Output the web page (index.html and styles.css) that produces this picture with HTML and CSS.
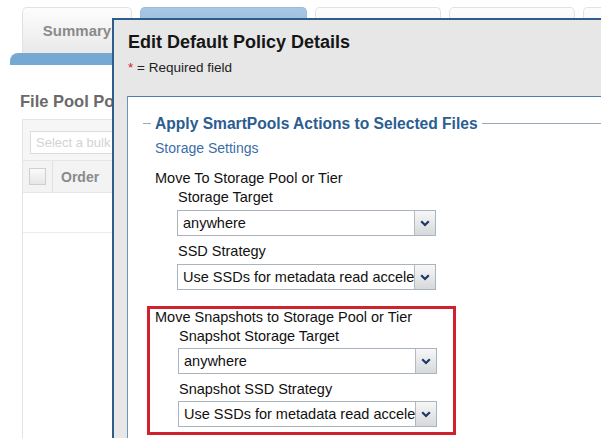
FILE: index.html
```html
<!DOCTYPE html>
<html lang="en">

<head>
    <meta charset="UTF-8">
    <title>Edit Default Policy Details</title>
    <link rel="stylesheet" href="styles.css">
</head>

<body>
    <div class="page">
        <div class="tabs">
            <div class="tab">Summary</div>
            <div class="tab tabActive"></div>
            <div class="tab"></div>
            <div class="tab"></div>
            <div class="tab"></div>
        </div>
        <div class="tabBar"></div>

        <h2 class="pageTitle">File Pool Policies</h2>

        <div class="gridPanel">
            <div class="gridToolbar">
                <input class="bulkInput" type="text" placeholder="Select a bulk action">
            </div>
            <div class="gridHead">
                <span class="chkCell"><span class="chk"></span></span>
                <span class="colName">Order</span>
            </div>
            <div class="gridRow"></div>
        </div>
    </div>

    <div class="modal">
        <div class="modalHead">
            <h1 class="modalTitle">Edit Default Policy Details</h1>
            <p class="required"><span class="star">*</span> = Required field</p>
        </div>

        <div class="modalBody">
            <fieldset class="actions">
                <legend>Apply SmartPools Actions to Selected Files</legend>
                <p class="subTitle">Storage Settings</p>

                <div class="group">
                    <p class="groupTitle">Move To Storage Pool or Tier</p>
                    <div class="field">
                        <label>Storage Target</label>
                        <div class="select">
                            <span class="selValue">anywhere</span>
                            <span class="selBtn"><svg width="10" height="7" viewBox="0 0 10 7"><path d="M1.2 1.2 L5 5 L8.8 1.2" fill="none" stroke="#1d3768" stroke-width="2.2"/></svg></span>
                        </div>
                    </div>
                    <div class="field">
                        <label>SSD Strategy</label>
                        <div class="select">
                            <span class="selValue">Use SSDs for metadata read acceleration</span>
                            <span class="selBtn"><svg width="10" height="7" viewBox="0 0 10 7"><path d="M1.2 1.2 L5 5 L8.8 1.2" fill="none" stroke="#1d3768" stroke-width="2.2"/></svg></span>
                        </div>
                    </div>
                </div>

                <div class="group highlight">
                    <p class="groupTitle">Move Snapshots to Storage Pool or Tier</p>
                    <div class="field">
                        <label>Snapshot Storage Target</label>
                        <div class="select">
                            <span class="selValue">anywhere</span>
                            <span class="selBtn"><svg width="10" height="7" viewBox="0 0 10 7"><path d="M1.2 1.2 L5 5 L8.8 1.2" fill="none" stroke="#1d3768" stroke-width="2.2"/></svg></span>
                        </div>
                    </div>
                    <div class="field">
                        <label>Snapshot SSD Strategy</label>
                        <div class="select">
                            <span class="selValue">Use SSDs for metadata read acceleration</span>
                            <span class="selBtn"><svg width="10" height="7" viewBox="0 0 10 7"><path d="M1.2 1.2 L5 5 L8.8 1.2" fill="none" stroke="#1d3768" stroke-width="2.2"/></svg></span>
                        </div>
                    </div>
                </div>
            </fieldset>
        </div>
    </div>
</body>

</html>
```

FILE: styles.css
```css
* {
    margin: 0;
    padding: 0;
    box-sizing: border-box;
    font-family: "Liberation Sans", Arial, Helvetica, sans-serif;
}

body {
    background-color: white;
    width: 601px;
    height: 438px;
    overflow: hidden;
    position: relative;
}

/* page behind the dialog */

.tabs {
    display: flex;
    gap: 8px;
    padding: 7px 0 0 22px;
}

.tab {
    width: 126px;
    height: 46px;
    flex-shrink: 0;
    border: 1px solid #e2e2e2;
    border-bottom: none;
    border-radius: 5px 5px 0 0;
    background: linear-gradient(#fdfdfd, #e9e9e9);
    color: #8a8a8a;
    font-size: 15px;
    font-weight: bold;
    text-align: center;
    line-height: 46px;
}

.tab:first-child {
    width: 110px;
}

.tabActive {
    width: 167px;
    background: linear-gradient(#a9c8e4, #7eaed6);
    border-color: #9bbddc;
}

.tabBar {
    height: 12px;
    margin-left: 10px;
    background-color: #76a9d2;
    border-radius: 8px 0 0 0;
}

.pageTitle {
    margin: 26px 0 0 20px;
    font-size: 16.5px;
    color: #6a6a6a;
    line-height: 20px;
    white-space: nowrap;
}

.gridPanel {
    margin: 8px 0 0 22px;
    width: 300px;
    height: 340px;
    border: 1px solid #e4e4e4;
    background-color: white;
}

.gridToolbar {
    background-color: #f6f6f6;
    padding: 11px 0 6px 7px;
    border-bottom: 1px solid #e6e6e6;
}

.bulkInput {
    width: 200px;
    height: 23px;
    border: 1px solid #d7dde4;
    padding-left: 5px;
    font-size: 13px;
    background-color: white;
}

.bulkInput::placeholder {
    color: #d3d3d3;
}

.gridHead {
    display: flex;
    align-items: center;
    height: 32px;
    background-color: #f3f3f3;
    border-bottom: 1px solid #e6e6e6;
}

.chkCell {
    width: 30px;
    height: 100%;
    display: flex;
    align-items: center;
    justify-content: center;
    border-right: 1px solid #e2e2e2;
}

.chk {
    width: 17px;
    height: 17px;
    border: 1px solid #cfcfcf;
    background: linear-gradient(#fafafa, #e6e6e6);
}

.colName {
    padding-left: 8px;
    font-size: 14px;
    font-weight: bold;
    color: #8a8a8a;
}

.gridRow {
    height: 40px;
    border-bottom: 1px solid #ececec;
}

/* dialog */

.modal {
    position: absolute;
    left: 112px;
    top: 18px;
    width: 520px;
    height: 440px;
    border: 2px solid #2f5d8b;
    border-right: none;
    border-bottom: none;
    background-color: #e7e7e7;
}

.modalHead {
    padding: 11px 0 0 14px;
    height: 76px;
}

.modalTitle {
    font-size: 18px;
    line-height: 22px;
    color: #151515;
}

.required {
    margin-top: 7px;
    font-size: 13.5px;
    line-height: 16px;
    color: #222;
}

.star {
    color: #d0202a;
}

.modalBody {
    margin-left: 13px;
    height: 400px;
    background-color: white;
    border-top: 1px solid #4f7dab;
    border-left: 1px solid #6b93bb;
    padding: 18px 0 0 15px;
}

.actions {
    border: none;
    border-top: 1px solid #98a9ba;
    padding: 0 0 0 12px;
    min-width: 0;
}

.actions legend {
    margin-left: -4px;
    padding: 0 4px;
    font-size: 15.6px;
    font-weight: bold;
    line-height: 17px;
    color: #2b5d91;
}

.subTitle {
    margin-top: 7px;
    font-size: 14px;
    line-height: 19px;
    color: #3a6ea6;
}

.group {
    margin-top: 11px;
    width: 309px;
}

.groupTitle {
    font-size: 14.5px;
    line-height: 19px;
    color: #111;
}

.field {
    padding-left: 22px;
    margin-bottom: 6px;
}

.field label {
    display: block;
    padding-left: 1px;
    font-size: 14.5px;
    line-height: 19px;
    color: #111;
}

.select {
    display: flex;
    width: 259px;
    height: 26px;
    margin-top: 3px;
    border: 1px solid #aab4bf;
    background-color: white;
}

.selValue {
    flex: 1;
    overflow: hidden;
    white-space: nowrap;
    padding-left: 5px;
    font-size: 14.5px;
    line-height: 24px;
    color: #111;
}

.selBtn {
    width: 21px;
    display: flex;
    align-items: center;
    justify-content: center;
    border-left: 1px solid #b3b9c0;
    background: linear-gradient(#f7f7f7, #d6d8da);
}

.highlight {
    margin: 16px 0 0 -8px;
    padding: 0 0 1px 5px;
    height: 129px;
    border: 3px solid #d1212c;
}

.highlight .groupTitle {
    line-height: 16px;
}

.highlight .field {
    padding-left: 23px;
}

.highlight .field label {
    margin-top: 2px;
}

.highlight .select {
    margin-top: 2px;
}
```
